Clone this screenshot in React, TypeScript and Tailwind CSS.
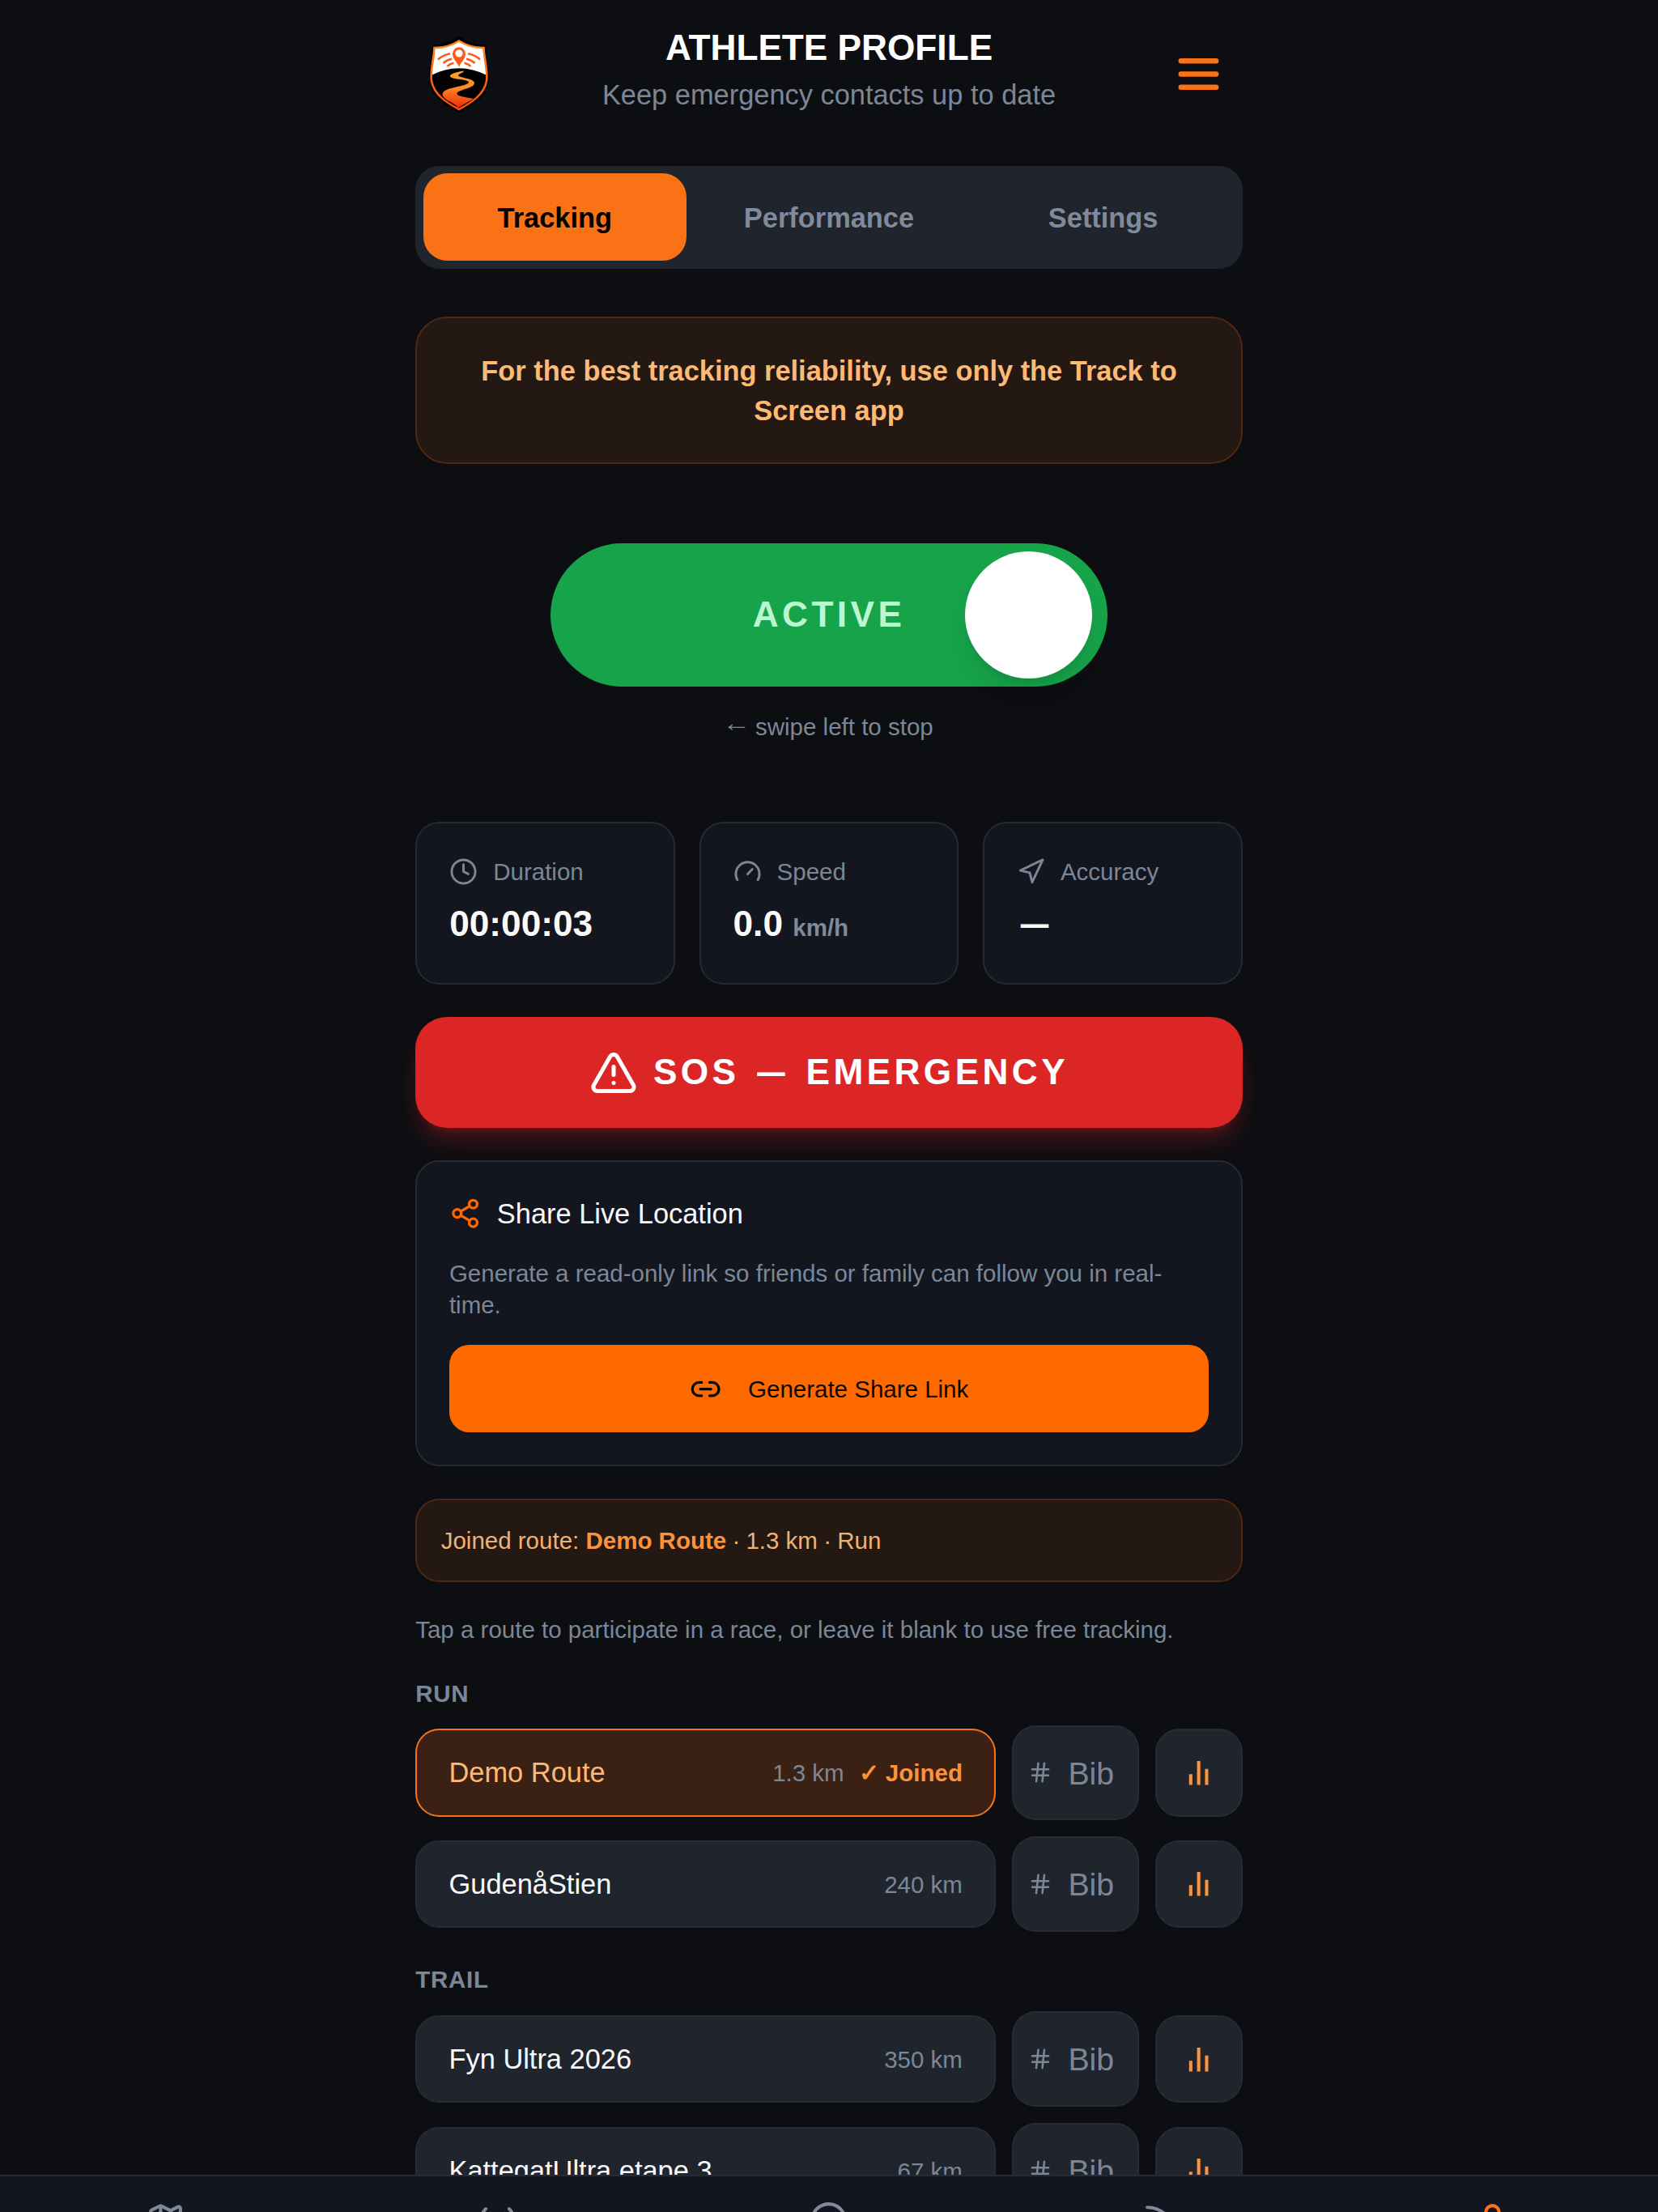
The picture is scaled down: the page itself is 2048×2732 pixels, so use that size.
import {
  Clock,
  Compass,
  Gauge,
  Hash,
  Link2,
  Map,
  Navigation,
  Radio,
  Rss,
  Share2,
  TriangleAlert,
  User,
} from 'lucide-react';

type Route = {
  name: string;
  distance: string;
  joined?: boolean;
};

const groups: { title: string; routes: Route[] }[] = [
  {
    title: 'RUN',
    routes: [
      { name: 'Demo Route', distance: '1.3 km', joined: true },
      { name: 'GudenåStien', distance: '240 km' },
    ],
  },
  {
    title: 'TRAIL',
    routes: [
      { name: 'Fyn Ultra 2026', distance: '350 km' },
      { name: 'KattegatUltra etape 3', distance: '67 km' },
    ],
  },
];

function Logo() {
  return (
    <svg viewBox="0 0 78 98" className="h-[98px] w-[78px]" fill="none">
      <defs>
        <linearGradient id="road" x1="0" y1="44" x2="0" y2="90" gradientUnits="userSpaceOnUse">
          <stop offset="0" stopColor="#f5a524" />
          <stop offset="0.45" stopColor="#ff8a2a" />
          <stop offset="1" stopColor="#f02a08" />
        </linearGradient>
        <linearGradient id="edge" x1="0" y1="7" x2="0" y2="93" gradientUnits="userSpaceOnUse">
          <stop offset="0" stopColor="#ff8a1e" />
          <stop offset="1" stopColor="#f8480c" />
        </linearGradient>
      </defs>
      <path d="M39 1.5 Q53 12 72 12.5 C73 28 78 45 75.500 60 C72 77 55 88 39 96 C23 88 6 77 2.500 60 C0 45 5 28 6 12.500 Q25 12 39 1.500Z" fill="#000" />
      <path d="M39 7.500 Q52 16 69.500 16 C70 30 75 45 73 57 C70 74 54 84 39 92 C24 84 8 74 5 57 C3 45 8 30 8.500 16 Q26 16 39 7.500Z" fill="#fff" />
      <path d="M4.500 50 Q39 32.500 73.500 50 C74 72 56 82 39 92 C22 82 4 72 4.500 50Z" fill="#000" />
      <path d="M45 44.500 C36 46 27 48 28 51.500 C30 55.500 50 54.500 51 58.500 C51 64 20 64 18.500 73 C18 80 34 84 38 90 L57 79 C48 77 35 76 36.500 72 C38 68 58 66 58 59.500 C58 54 40 53 38 50.500 C38 48 45 47 45 44.500Z" fill="url(#road)" />
      <path d="M39 7.500 Q52 16 69.500 16 C70 30 75 45 73 57 C70 74 54 84 39 92 C24 84 8 74 5 57 C3 45 8 30 8.500 16 Q26 16 39 7.500Z" stroke="url(#edge)" strokeWidth="2.600" />
      <path
        d="M13 30.500 Q19 25 28 23.300 M19.500 35 Q24 31 30 29.800 M24.500 38.800 Q27.500 35.700 32.500 34.700 M65 30.500 Q59 25 50 23.300 M58.500 35 Q54 31 48 29.800 M53.500 38.800 Q50.500 35.700 45.500 34.700"
        stroke="#fb5a1c"
        strokeWidth="2.600"
      />
      <path d="M39 40 C37 34 31 30 31 23.500 A8 8.300 0 0 1 47 23.500 C47 30 41 34 39 40Z" fill="#fb5a1c" />
      <circle cx="39" cy="23" r="4.600" fill="#fff" />
    </svg>
  );
}

function MenuIcon() {
  return (
    <svg viewBox="0 0 24 24" className="size-[65px]" fill="none" stroke="currentColor" strokeWidth="2.4" strokeLinecap="round">
      <path d="M4 6h16M4 12h16M4 18h16" />
    </svg>
  );
}

function BarsIcon() {
  return (
    <svg viewBox="0 0 24 24" className="size-4" fill="none" stroke="currentColor" strokeWidth="2.5">
      <path d="M18 21V9M12 21V3M6 21v-8" />
    </svg>
  );
}

// The em dash is set a bit narrower than the font draws it
function Dash() {
  return <span className="inline-block scale-x-[0.78]">—</span>;
}

function Header() {
  return (
    <header className="flex h-[121.500px] items-center justify-between">
      <div className="flex size-11 items-center justify-center">
        <Logo />
      </div>
      <div className="self-start text-center">
        <h1 className="text-lg leading-tight font-bold text-white">ATHLETE PROFILE</h1>
        <p className="mt-[6.500px] text-sm text-[#7b8797]">Keep emergency contacts up to date</p>
      </div>
      <button className="flex size-11 items-center justify-center text-[#f97316]">
        <MenuIcon />
      </button>
    </header>
  );
}

function Tabs() {
  return (
    <div className="mt-[52px] flex gap-[14px] rounded-xl bg-[#20242c] p-1 text-sm font-bold text-[#7f8a9c]">
      <button className="h-11 flex-1 rounded-xl bg-[#f97316] pt-[3px] text-black">Tracking</button>
      <button className="h-11 flex-1 pt-[3px]">Performance</button>
      <button className="h-11 flex-1 pt-[3px]">Settings</button>
    </div>
  );
}

function RouteRow({ route }: { route: Route }) {
  return (
    <div className="flex h-12 items-center gap-2">
      <button
        className={
          route.joined
            ? 'flex h-11 flex-1 items-center rounded-xl border-2 border-[#f97316] bg-[#3b2114] px-4 pt-px text-[#fdba74]'
            : 'flex h-11 flex-1 items-center rounded-xl border-2 border-[#262b34] bg-[#20242c] px-4 pt-px text-[#fafafa]'
        }
      >
        <span className="text-sm">{route.name}</span>
        <span className="ml-auto text-xs text-[#7b8797]">{route.distance}</span>
        {route.joined && <span className="ml-[18px] text-xs font-bold text-[#fb923c]">✓ Joined</span>}
      </button>
      <div className="flex h-12 w-16 items-center rounded-xl border-2 border-[#262b34] bg-[#20242c] pl-[18px] text-[#7b8797]">
        <Hash size={30} />
        <span className="ml-[19.500px] pt-px text-base">Bib</span>
      </div>
      <button className="flex size-11 items-center justify-center rounded-xl border-2 border-[#262b34] bg-[#20242c] text-[#fb923c]">
        <BarsIcon />
      </button>
    </div>
  );
}

function App() {
  return (
    <div className="flex h-screen flex-col overflow-hidden bg-[#0d0e12] font-['Liberation_Sans',Arial,sans-serif] [--radius-2xl:39.3px] [--radius-lg:24.600px] [--radius-xl:29.500px] [--spacing:9.826px] [--text-base:39.300px] [--text-lg:44.200px] [--text-sm:34.400px] [--text-xs:29.500px]">
      <main className="mx-auto min-h-0 w-[1021.600px] flex-1 overflow-visible pt-[31px]">
        <Header />
        <Tabs />

        <div className="mt-6 h-[181.800px] rounded-2xl border-2 border-[#4f2712] bg-[#241813] px-8 pt-[41px] text-center text-sm font-bold text-[#fdba74]">
          For the best tracking reliability, use only the Track to Screen app
        </div>

        <div className="relative mx-auto mt-10 flex h-18 w-70 items-center justify-center rounded-full bg-[#16a34a]">
          <span className="text-lg font-bold tracking-widest text-[#bbf7d0]">ACTIVE</span>
          <span className="absolute top-1 right-[19px] size-16 rounded-full bg-white shadow-[0_20px_30px_-6px_rgba(0,0,0,0.1),0_8px_12px_-8px_rgba(0,0,0,0.1)]" />
        </div>
        <p className="mt-3 h-4 text-center text-xs text-[#7b8797]">
          <span className="inline-block -translate-y-[5px] scale-x-120">←</span> swipe left to stop
        </p>

        <div className="mt-10 grid h-[201.200px] grid-cols-3 gap-3">
          <div className="rounded-xl border-2 border-[#252a33] bg-[#13161f] px-[40px] pt-[40px]">
            <div className="flex h-4 items-center gap-[19px] text-xs text-[#7b8797]">
              <Clock size={35} />
              Duration
            </div>
            <div className="mt-[11px] text-lg font-bold text-[#fafafa]">00:00:03</div>
          </div>
          <div className="rounded-xl border-2 border-[#252a33] bg-[#13161f] px-[40px] pt-[40px]">
            <div className="flex h-4 items-center gap-[19px] text-xs text-[#7b8797]">
              <Gauge size={35} />
              Speed
            </div>
            <div className="mt-[11px] text-lg font-bold text-[#fafafa]">
              0.0 <span className="text-xs text-[#7f8a9c]">km/h</span>
            </div>
          </div>
          <div className="rounded-xl border-2 border-[#252a33] bg-[#13161f] px-[40px] pt-[40px]">
            <div className="flex h-4 items-center gap-[19px] text-xs text-[#7b8797]">
              <Navigation size={35} />
              Accuracy
            </div>
            <div className="mt-[11px] text-lg font-bold text-[#fafafa]">
              <Dash />
            </div>
          </div>
        </div>

        <button className="mt-[39.600px] flex h-14 w-full items-center justify-center gap-[19px] rounded-2xl bg-[#dc2626] text-lg font-bold tracking-widest text-white shadow-[0_20px_30px_-6px_rgba(220,38,38,0.3),0_8px_12px_-8px_rgba(220,38,38,0.3)]">
          <TriangleAlert size={60} />
          <span>
            SOS <Dash /> EMERGENCY
          </span>
        </button>

        <section className="relative mt-[39.400px] h-[378.500px] rounded-xl border-2 border-[#252a33] bg-[#13161f] p-[39.700px]">
          <h2 className="flex items-center gap-2 text-sm text-[#fafafa]">
            <Share2 size={39.3} className="text-[#ff6a00]" />
            Share Live Location
          </h2>
          <p className="mt-3 text-xs text-[#7b8797]">
            Generate a read-only link so friends or family can follow you in real-time.
          </p>
          <button className="mt-3 flex h-11 w-full items-center justify-center gap-[33px] rounded-lg bg-[#ff6a00] text-xs text-[#0a0704]">
            <Link2 size={39.3} />
            Generate Share Link
          </button>
        </section>

        <div className="mt-[39.400px] flex h-[103px] items-center rounded-xl border-2 border-[#4f2712] bg-[#241813] px-3 text-xs text-[#f0b273]">
          <p>
            Joined route: <span className="font-bold text-[#fb923c]">Demo Route</span> <span className="-mx-px">·</span> 1.3 km{' '}
            <span className="-mx-px">·</span> Run
          </p>
        </div>

        <p className="mt-4 h-4 text-xs text-[#7b8797]">Tap a route to participate in a race, or leave it blank to use free tracking.</p>

        {groups.map((group) => (
          <div key={group.title} className="mt-4 flex flex-col gap-2">
            <h3 className="h-4 text-xs font-bold tracking-wide text-[#7b8797]">{group.title}</h3>
            {group.routes.map((route) => (
              <RouteRow key={route.name} route={route} />
            ))}
          </div>
        ))}
      </main>

      <nav className="relative grid h-[46px] shrink-0 grid-cols-5 justify-items-center overflow-hidden border-t-2 border-[#252a33] bg-[#13161f] pt-[30px] text-[#7f8a9c]">
        <Map size={49} />
        <Radio size={49} />
        <Compass size={49} />
        <Rss size={49} />
        <User size={49} className="text-[#f97316]" />
      </nav>
    </div>
  );
}

export default App;
